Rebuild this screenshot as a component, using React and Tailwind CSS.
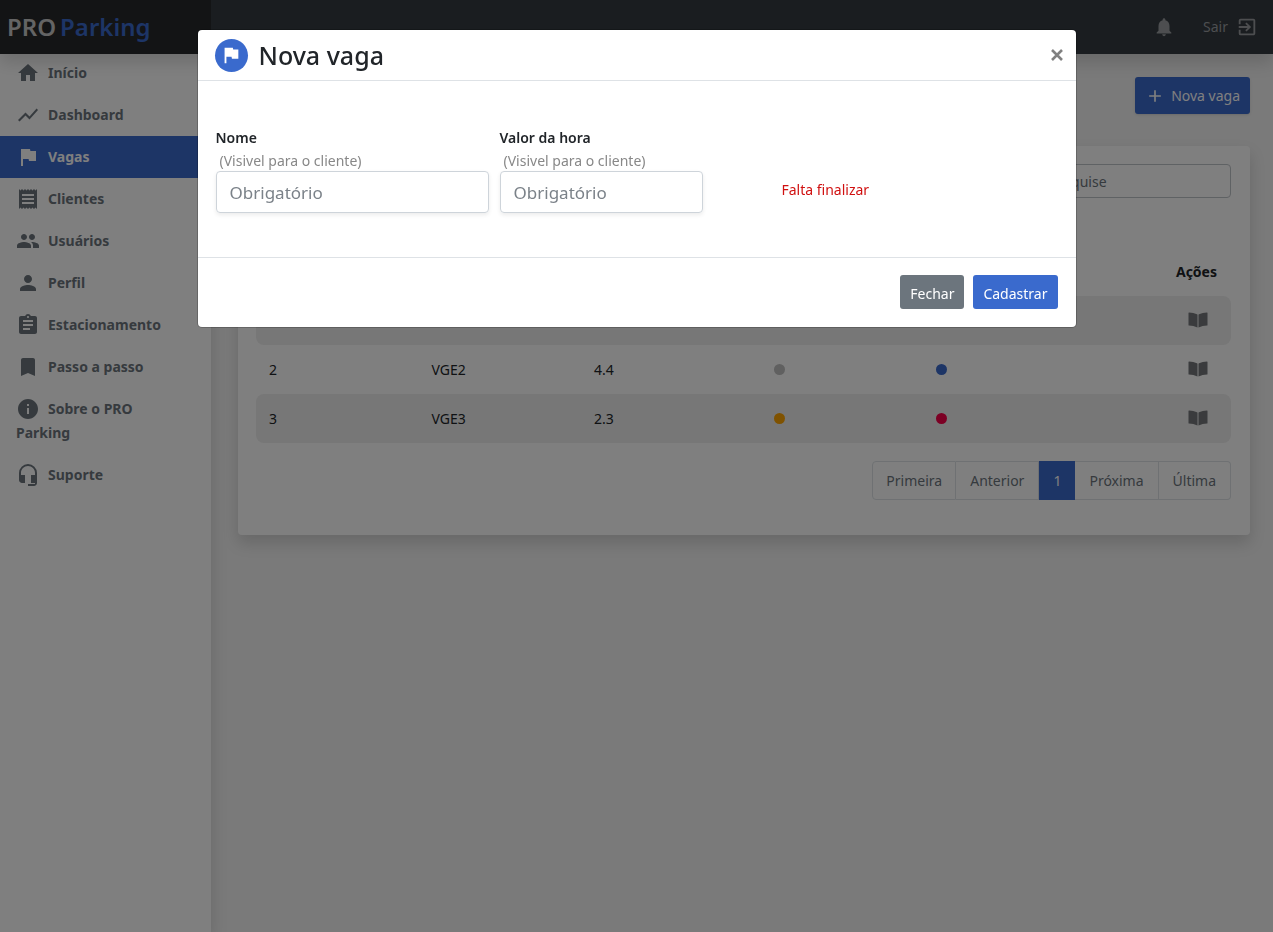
import React from "react";
import {
  MdHome, MdShowChart, MdFlag, MdReceipt, MdPeople, MdPerson, MdAssignment,
  MdBookmark, MdInfo, MdHeadsetMic, MdNotifications, MdExitToApp, MdAdd,
} from "react-icons/md";

const menu = [
  { label: "Início", Icon: MdHome },
  { label: "Dashboard", Icon: MdShowChart },
  { label: "Vagas", Icon: MdFlag, active: true },
  { label: "Clientes", Icon: MdReceipt },
  { label: "Usuários", Icon: MdPeople },
  { label: "Perfil", Icon: MdPerson },
  { label: "Estacionamento", Icon: MdAssignment },
  { label: "Passo a passo", Icon: MdBookmark },
  { label: "Sobre o PRO Parking", Icon: MdInfo },
  { label: "Suporte", Icon: MdHeadsetMic },
];

const spots = [
  { id: 1, name: "VGE1", price: "3.5", a: "bg-[#ffa500]", b: "bg-[#3a6acd]" },
  { id: 2, name: "VGE2", price: "4.4", a: "bg-[#c0c0c0]", b: "bg-[#3a6acd]" },
  { id: 3, name: "VGE3", price: "2.3", a: "bg-[#ffa500]", b: "bg-[#f80048]" },
];

function BookIcon() {
  return (
    <svg viewBox="0 0 20 16" className="h-4 w-5" fill="currentColor" aria-hidden="true">
      <path d="M0.5 1.1 Q0.5 0.6 1 0.6 Q5.5 0.8 9 2.3 Q9.5 2.5 9.5 3 V15.4 Q5.5 13.8 0.9 13.6 Q0.5 13.5 0.5 13 Z" />
      <path d="M19.5 1.1 Q19.5 0.6 19 0.6 Q14.5 0.8 11 2.3 Q10.5 2.5 10.5 3 V15.4 Q14.5 13.8 19.1 13.6 Q19.5 13.5 19.5 13 Z" />
    </svg>
  );
}

function Header() {
  return (
    <header className="relative z-10 flex h-[54px] shrink-0 bg-[#343a40] shadow-[0_8px_16px_rgba(0,0,0,0.15)]">
      <a href="#" className="flex w-[211px] items-center gap-1 bg-[#27292b] pl-[7px] text-2xl font-semibold text-[#c8c8c8]">
        PRO <span className="text-[#3a6acd]">Parking</span>
      </a>
      <nav className="ml-auto flex items-center gap-7 pr-[15px] text-[#9a9da0]">
        <button type="button" aria-label="Notificações"><MdNotifications size={22} /></button>
        <a href="#" className="flex items-center gap-2 text-sm">Sair <MdExitToApp size={22} /></a>
      </nav>
    </header>
  );
}

function Sidebar() {
  return (
    <aside className="w-[211px] shrink-0 bg-white shadow-[0_8px_16px_rgba(0,0,0,0.15)]">
      <ul className="-mt-0.5">
        {menu.map(({ label, Icon, active }) => (
          <li key={label}>
            <a
              href="#"
              className={
                active
                  ? "block bg-[#3a6acd] py-[9px] pr-6 pl-4 text-sm leading-6 font-bold text-white"
                  : "block py-[9px] pr-6 pl-4 text-sm leading-6 font-bold text-[#6c757d]"
              }
            >
              <Icon size={24} className="mr-2 inline-block align-bottom" />
              {label}
            </a>
          </li>
        ))}
      </ul>
    </aside>
  );
}

function Pagination() {
  const item = "border border-l-0 border-[#dee2e6] px-3.5 text-[#6c757d]";
  return (
    <nav aria-label="Paginação" className="mt-[18px] flex justify-end text-sm">
      <div className="flex h-[39px]">
        <button type="button" className="rounded-l border border-[#dee2e6] px-[13px] text-[#6c757d]">Primeira</button>
        <button type="button" className={item}>Anterior</button>
        <button type="button" className="bg-[#3a6acd] px-3.5 text-white">1</button>
        <button type="button" className={item}>Próxima</button>
        <button type="button" className="rounded-r border border-l-0 border-[#dee2e6] px-3.5 text-[#6c757d]">Última</button>
      </div>
    </nav>
  );
}

function SpotsCard() {
  return (
    <section className="mt-8 rounded bg-white pt-[18px] pr-[19px] pb-[35px] pl-[18px] shadow-[0_8px_16px_rgba(0,0,0,0.15)]">
      <div className="flex justify-end">
        <input
          type="search"
          aria-label="Pesquise"
          placeholder="Pesquise"
          className="h-[34px] w-[196px] rounded border border-[#bfc4c9] px-3 text-sm placeholder:text-[#6c757d]"
        />
      </div>
      <table className="mt-[49px] w-full table-fixed text-sm text-[#212529]">
        <thead>
          <tr className="h-[49px] text-left">
            <th className="px-[13px]">#</th>
            <th className="px-[13px]">Nome</th>
            <th className="px-[13px]">Valor</th>
            <th className="px-[13px]">Reserva</th>
            <th className="px-[13px]">Status</th>
            <th className="px-3.5 text-right">Ações</th>
          </tr>
        </thead>
        <tbody>
          {spots.map((s) => (
            <tr key={s.id} className="h-[49px] odd:bg-[#eeeeee]">
              <td className="rounded-l-lg px-[13px]">{s.id}</td>
              <td className="px-[13px]">{s.name}</td>
              <td className="px-[13px]">{s.price}</td>
              <td className="pl-[30px]"><span className={`block size-[11px] rounded-full ${s.a}`} /></td>
              <td className="pl-[30px]"><span className={`block size-[11px] rounded-full ${s.b}`} /></td>
              <td className="rounded-r-lg pr-[23px] pb-[3px] text-right text-[#75777a]">
                <button type="button" aria-label="Detalhes" className="align-middle"><BookIcon /></button>
              </td>
            </tr>
          ))}
        </tbody>
      </table>
      <Pagination />
    </section>
  );
}

function Field({ id, label, className }) {
  return (
    <div className={className}>
      <label htmlFor={id} className="block text-sm leading-6 font-semibold text-[#212529]">
        {label}
        <span className="block pl-1 leading-[21px] font-normal text-[#888888]">(Visivel para o cliente)</span>
      </label>
      <input
        id={id}
        placeholder="Obrigatório"
        className="block h-[42px] w-full rounded border border-[#ced4da] px-[13px] text-[17px] shadow-[0_2px_4px_rgba(0,0,0,0.08)] placeholder:text-[#7b8289]"
      />
    </div>
  );
}

function NewSpotDialog() {
  return (
    <div className="fixed inset-0 z-20 bg-black/50 px-4 pt-[30px]">
      <div role="dialog" aria-modal="true" aria-labelledby="dialog-title" className="mx-auto max-w-[878px] rounded bg-white shadow-[0_0_0_1px_rgba(0,0,0,0.2)]">
        <div className="flex h-[51px] items-center border-b border-[#dee2e6] pr-2.5 pl-[17px]">
          <span className="flex size-[33px] items-center justify-center rounded-full bg-[#3a6acd] text-white">
            <MdFlag size={22} />
          </span>
          <h2 id="dialog-title" className="ml-[11px] pt-0.5 text-[25px] font-medium text-[#212529]">Nova vaga</h2>
          <button type="button" aria-label="Fechar janela" className="ml-auto p-0.5 text-[#808080]">
            <svg viewBox="0 0 14 14" className="size-[14px]" fill="none" stroke="currentColor" strokeWidth="2.6" aria-hidden="true">
              <path d="M2 2L12 12M12 2L2 12" />
            </svg>
          </button>
        </div>
        <form id="nova-vaga" className="flex gap-[11px] px-[18px] pt-[45px] pb-11">
          <Field id="nome" label="Nome" className="w-[273px]" />
          <Field id="valor" label="Valor da hora" className="w-[203px]" />
          <p className="ml-[68px] self-center pt-10 text-sm leading-5 text-[#d01010]">Falta finalizar</p>
        </form>
        <div className="flex justify-end gap-[9px] border-t border-[#dee2e6] px-[18px] pt-[17px] pb-[18px] text-sm text-white">
          <button type="button" className="h-[34px] rounded-[3px] bg-[#6c757d] px-2.5 pt-[3px]">Fechar</button>
          <button type="submit" form="nova-vaga" className="h-[34px] rounded-[3px] bg-[#3a6acd] px-2.5 pt-[3px]">Cadastrar</button>
        </div>
      </div>
    </div>
  );
}

export default function App() {
  return (
    <div className="flex min-h-screen flex-col bg-[#f4f4f4] font-['Noto_Sans','Open_Sans',sans-serif]">
      <Header />
      <div className="flex flex-1">
        <Sidebar />
        <main className="min-w-0 flex-1 pt-[23px] pr-[23px] pl-[27px]">
          <div className="flex justify-end">
            <button type="button" className="flex h-[37px] items-center gap-1.5 rounded-[3px] bg-[#3a6acd] px-2.5 text-sm text-white shadow-sm">
              <MdAdd size={20} /> Nova vaga
            </button>
          </div>
          <SpotsCard />
        </main>
      </div>
      <NewSpotDialog />
    </div>
  );
}
